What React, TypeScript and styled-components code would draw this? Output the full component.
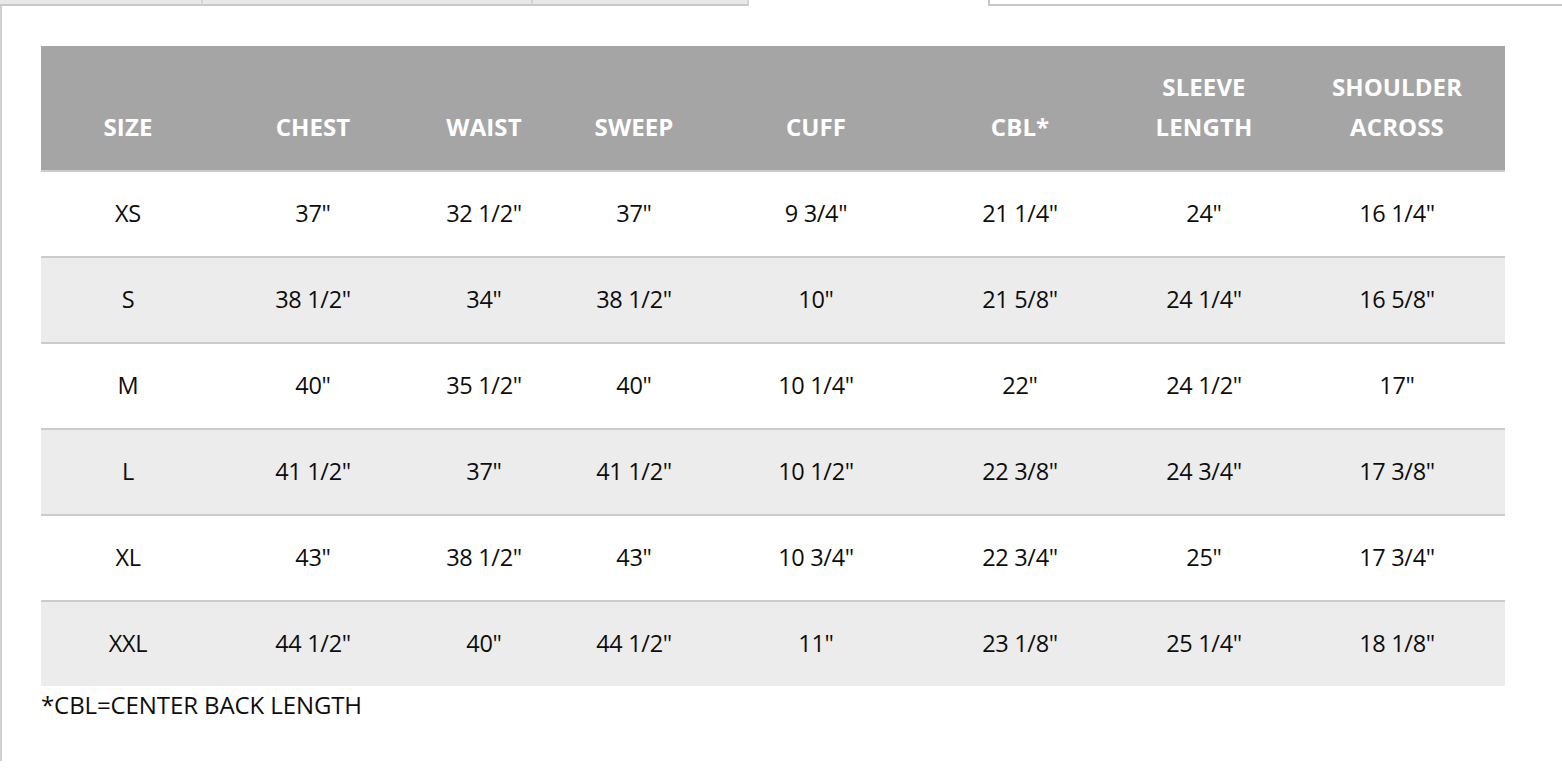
import React from "react";
import styled, { createGlobalStyle } from "styled-components";

const GlobalStyle = createGlobalStyle`
  html, body {
    margin: 0;
    padding: 0;
    background: #fff;
  }
  body {
    font-family: "Open Sans", "Noto Sans", "Liberation Sans", sans-serif;
    color: #111;
  }
`;

const COLS = "174px 196px 146px 154px 210px 198px 170px 216px";

const TabBar = styled.div`
  display: flex;
  height: 6px;
`;

const Tab = styled.div<{ w: number; active?: boolean }>`
  box-sizing: border-box;
  width: ${(p) => p.w}px;
  height: 6px;
  background: ${(p) => (p.active ? "#fff" : "#e8e8e8")};
  border-bottom: ${(p) => (p.active ? "none" : "2px solid #c8c8c8")};
  border-right: ${(p) => (p.active ? "none" : "2px solid #d4d4d4")};
`;

const WhiteTab = styled.div`
  box-sizing: border-box;
  flex: 1;
  height: 6px;
  background: #fff;
  border-left: 2px solid #c8c8c8;
  border-bottom: 2px solid #c8c8c8;
`;

const Panel = styled.div`
  border-left: 2px solid #d0d0d0;
  margin-top: -1px;
  padding: 41px 0 40px 39px;
  min-height: 720px;
  box-sizing: border-box;
`;

const Table = styled.div`
  width: 1464px;
`;

const HeadRow = styled.div`
  display: grid;
  grid-template-columns: ${COLS};
  background: #a5a5a5;
  height: 124px;
  align-items: end;
`;

const HeadCell = styled.div`
  color: #fff;
  font-weight: 700;
  font-size: 24px;
  line-height: 40px;
  text-align: center;
  padding-bottom: 23px;
  letter-spacing: 0.1px;
`;

const Row = styled.div<{ shaded: boolean }>`
  display: grid;
  grid-template-columns: ${COLS};
  align-items: center;
  height: 86px;
  box-sizing: border-box;
  border-top: 2px solid #cccccc;
  background: ${(p) => (p.shaded ? "#ececec" : "#fff")};
`;

const Cell = styled.div`
  text-align: center;
  font-size: 23.5px;
  font-weight: 500;
  color: #0d0d0d;
  letter-spacing: -0.3px;
  padding-bottom: 3px;
`;

const Note = styled.div`
  font-size: 24px;
  font-weight: 500;
  color: #0d0d0d;
  margin-top: 2px;
  letter-spacing: -0.1px;
`;

const headers: string[][] = [
  ["SIZE"],
  ["CHEST"],
  ["WAIST"],
  ["SWEEP"],
  ["CUFF"],
  ["CBL*"],
  ["SLEEVE", "LENGTH"],
  ["SHOULDER", "ACROSS"],
];

const rows: string[][] = [
  ["XS", '37"', '32 1/2"', '37"', '9 3/4"', '21 1/4"', '24"', '16 1/4"'],
  ["S", '38 1/2"', '34"', '38 1/2"', '10"', '21 5/8"', '24 1/4"', '16 5/8"'],
  ["M", '40"', '35 1/2"', '40"', '10 1/4"', '22"', '24 1/2"', '17"'],
  ["L", '41 1/2"', '37"', '41 1/2"', '10 1/2"', '22 3/8"', '24 3/4"', '17 3/8"'],
  ["XL", '43"', '38 1/2"', '43"', '10 3/4"', '22 3/4"', '25"', '17 3/4"'],
  ["XXL", '44 1/2"', '40"', '44 1/2"', '11"', '23 1/8"', '25 1/4"', '18 1/8"'],
];

const App: React.FC = () => {
  return (
    <>
      <GlobalStyle />
      <TabBar>
        <Tab w={203} />
        <Tab w={330} />
        <Tab w={216} />
        <Tab w={239} active />
        <WhiteTab />
      </TabBar>
      <Panel>
        <Table>
          <HeadRow>
            {headers.map((h, i) => (
              <HeadCell key={i}>
                {h.map((line, j) => (
                  <div key={j}>{line}</div>
                ))}
              </HeadCell>
            ))}
          </HeadRow>
          {rows.map((r, i) => (
            <Row key={i} shaded={i % 2 === 1}>
              {r.map((c, j) => (
                <Cell key={j}>{c}</Cell>
              ))}
            </Row>
          ))}
        </Table>
        <Note>*CBL=CENTER BACK LENGTH</Note>
      </Panel>
    </>
  );
};

export default App;
